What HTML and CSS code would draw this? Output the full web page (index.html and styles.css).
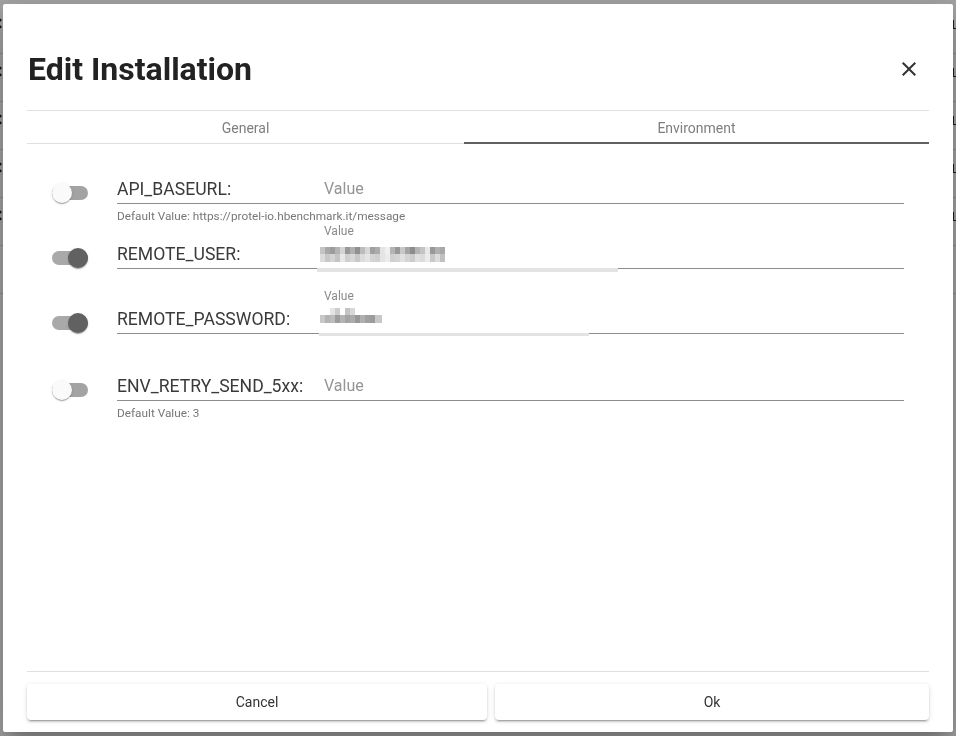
FILE: index.html
```html
<!DOCTYPE html>
<html lang="en">
<head>
<meta charset="utf-8">
<title>Edit Installation</title>
<link rel="stylesheet" href="styles.css">
</head>
<body>
<div class="page">
  <div class="page-row"><span class="chev"></span><span class="mark"></span></div>
  <div class="page-row"><span class="chev"></span><span class="mark"></span></div>
  <div class="page-row"><span class="chev"></span><span class="mark"></span></div>
  <div class="page-row"><span class="chev"></span><span class="mark"></span></div>
  <div class="page-row"><span class="chev"></span><span class="mark"></span></div>
  <div class="page-row"></div>
</div>
<div class="backdrop"></div>

<div class="dialog">
  <header class="dlg-head">
    <h1 class="dlg-title">Edit Installation</h1>
    <button class="close" type="button" aria-label="Close">
      <svg width="24" height="24" viewBox="0 0 24 24"><path d="M19 6.41L17.59 5 12 10.59 6.41 5 5 6.41 10.59 12 5 17.59 6.41 19 12 13.41 17.59 19 19 17.59 13.41 12z" fill="#333"/></svg>
    </button>
  </header>

  <nav class="tabs">
    <div class="tab">General</div>
    <div class="tab active">Environment</div>
  </nav>

  <div class="env-list">
    <div class="env-row">
      <div class="toggle"><span class="track"></span><span class="thumb"></span></div>
      <div class="field-col">
        <div class="field">
          <span class="field-label">API_BASEURL:</span>
          <span class="field-input"><span class="placeholder">Value</span></span>
        </div>
        <div class="hint">Default Value: https://protel-io.hbenchmark.it/message</div>
      </div>
    </div>

    <div class="env-row">
      <div class="toggle on"><span class="track"></span><span class="thumb"></span></div>
      <div class="field-col">
        <div class="field">
          <span class="field-label">REMOTE_USER:</span>
          <span class="field-input filled">
            <span class="float-label">Value</span>
            <svg class="mosaic" width="125" height="15" viewBox="0 0 125 15">
              <rect x="0" y="0" width="5" height="7" fill="#c4c4c4"/><rect x="5" y="0" width="5" height="7" fill="#a8a8a8"/><rect x="10" y="0" width="5" height="7" fill="#9c9c9c"/><rect x="15" y="0" width="5" height="7" fill="#b4b4b4"/><rect x="20" y="0" width="5" height="7" fill="#d4d4d4"/><rect x="25" y="0" width="5" height="7" fill="#989898"/><rect x="30" y="0" width="5" height="7" fill="#b0b0b0"/><rect x="35" y="0" width="5" height="7" fill="#909090"/><rect x="40" y="0" width="5" height="7" fill="#bcbcbc"/><rect x="45" y="0" width="5" height="7" fill="#d8d8d8"/><rect x="50" y="0" width="5" height="7" fill="#a0a0a0"/><rect x="55" y="0" width="5" height="7" fill="#acacac"/><rect x="60" y="0" width="5" height="7" fill="#e4e4e4"/><rect x="65" y="0" width="5" height="7" fill="#f0f0f0"/><rect x="70" y="0" width="5" height="7" fill="#b4b4b4"/><rect x="75" y="0" width="5" height="7" fill="#989898"/><rect x="80" y="0" width="5" height="7" fill="#c8c8c8"/><rect x="85" y="0" width="5" height="7" fill="#a4a4a4"/><rect x="90" y="0" width="5" height="7" fill="#8c8c8c"/><rect x="95" y="0" width="5" height="7" fill="#b4b4b4"/><rect x="100" y="0" width="5" height="7" fill="#c4c4c4"/><rect x="105" y="0" width="5" height="7" fill="#e8e8e8"/><rect x="110" y="0" width="5" height="7" fill="#989898"/><rect x="115" y="0" width="5" height="7" fill="#b0b0b0"/><rect x="120" y="0" width="5" height="7" fill="#a8a8a8"/>
              <rect x="0" y="7" width="5" height="8" fill="#dcdcdc"/><rect x="5" y="7" width="5" height="8" fill="#c8c8c8"/><rect x="10" y="7" width="5" height="8" fill="#d4d4d4"/><rect x="15" y="7" width="5" height="8" fill="#c4c4c4"/><rect x="20" y="7" width="5" height="8" fill="#e8e8e8"/><rect x="25" y="7" width="5" height="8" fill="#d0d0d0"/><rect x="30" y="7" width="5" height="8" fill="#d8d8d8"/><rect x="35" y="7" width="5" height="8" fill="#c8c8c8"/><rect x="40" y="7" width="5" height="8" fill="#dcdcdc"/><rect x="45" y="7" width="5" height="8" fill="#e4e4e4"/><rect x="50" y="7" width="5" height="8" fill="#d4d4d4"/><rect x="55" y="7" width="5" height="8" fill="#d0d0d0"/><rect x="60" y="7" width="5" height="8" fill="#e4e4e4"/><rect x="65" y="7" width="5" height="8" fill="#ececec"/><rect x="70" y="7" width="5" height="8" fill="#d0d0d0"/><rect x="75" y="7" width="5" height="8" fill="#d4d4d4"/><rect x="80" y="7" width="5" height="8" fill="#e0e0e0"/><rect x="85" y="7" width="5" height="8" fill="#d4d4d4"/><rect x="90" y="7" width="5" height="8" fill="#cccccc"/><rect x="95" y="7" width="5" height="8" fill="#e0e0e0"/><rect x="100" y="7" width="5" height="8" fill="#dcdcdc"/><rect x="105" y="7" width="5" height="8" fill="#ececec"/><rect x="110" y="7" width="5" height="8" fill="#c8c8c8"/><rect x="115" y="7" width="5" height="8" fill="#dcdcdc"/><rect x="120" y="7" width="5" height="8" fill="#c0c0c0"/>
            </svg>
            <span class="bar bar-user"></span>
          </span>
        </div>
      </div>
    </div>

    <div class="env-row">
      <div class="toggle on"><span class="track"></span><span class="thumb"></span></div>
      <div class="field-col">
        <div class="field">
          <span class="field-label">REMOTE_PASSWORD:</span>
          <span class="field-input filled pass">
            <span class="float-label">Value</span>
            <svg class="mosaic" width="62" height="15" viewBox="0 0 62 15">
              <rect x="10" y="0" width="5" height="7" fill="#e4e4e4"/><rect x="15" y="0" width="5" height="7" fill="#cccccc"/><rect x="25" y="0" width="5" height="7" fill="#c4c4c4"/><rect x="30" y="0" width="5" height="7" fill="#d8d8d8"/>
              <rect x="0" y="7" width="5" height="8" fill="#c8c8c8"/><rect x="5" y="7" width="5" height="8" fill="#b4b4b4"/><rect x="10" y="7" width="5" height="8" fill="#bcbcbc"/><rect x="15" y="7" width="5" height="8" fill="#9c9c9c"/><rect x="20" y="7" width="5" height="8" fill="#b4b4b4"/><rect x="25" y="7" width="5" height="8" fill="#a4a4a4"/><rect x="30" y="7" width="5" height="8" fill="#acacac"/><rect x="35" y="7" width="5" height="8" fill="#989898"/><rect x="40" y="7" width="5" height="8" fill="#b0b0b0"/><rect x="45" y="7" width="5" height="8" fill="#a0a0a0"/><rect x="50" y="7" width="5" height="8" fill="#9c9c9c"/><rect x="55" y="7" width="7" height="8" fill="#c8c8c8"/>
            </svg>
            <span class="bar bar-pass"></span>
          </span>
        </div>
      </div>
    </div>

    <div class="env-row last">
      <div class="toggle"><span class="track"></span><span class="thumb"></span></div>
      <div class="field-col">
        <div class="field">
          <span class="field-label">ENV_RETRY_SEND_5xx:</span>
          <span class="field-input"><span class="placeholder">Value</span></span>
        </div>
        <div class="hint">Default Value: 3</div>
      </div>
    </div>
  </div>

  <footer class="dlg-foot">
    <button class="btn btn-cancel" type="button">Cancel</button>
    <button class="btn btn-ok" type="button">Ok</button>
  </footer>
</div>
</body>
</html>
```

FILE: styles.css
```css
* { box-sizing: border-box; }

html, body {
  margin: 0;
  height: 100%;
}

body {
  font-family: Roboto, "Liberation Sans", Arial, sans-serif;
  background: #ffffff;
  overflow: hidden;
}

/* page behind the dialog */
.page {
  padding-top: 6px;
}

.page-row {
  height: 48px;
  border-bottom: 1px solid #dcdcdc;
  display: flex;
  justify-content: space-between;
  align-items: flex-start;
  padding-top: 14px;
}

.chev {
  display: block;
  width: 7px;
  height: 7px;
  margin-left: -3px;
  border-left: 2px solid #222;
  border-bottom: 2px solid #222;
  transform: rotate(45deg);
}

.mark {
  display: block;
  width: 6px;
  height: 9px;
  margin-right: -3px;
  border-left: 1px solid #333;
  border-bottom: 1px solid #333;
}

.backdrop {
  position: fixed;
  inset: 0;
  background: rgba(0, 0, 0, 0.36);
}

/* dialog */
.dialog {
  position: fixed;
  left: 3px;
  top: 4px;
  width: 950px;
  height: 728px;
  background: #fff;
  border-radius: 2px;
  box-shadow: 0 11px 15px -7px rgba(0,0,0,.2), 0 24px 38px 3px rgba(0,0,0,.14), 0 9px 46px 8px rgba(0,0,0,.12);
  padding: 0 24px;
  display: flex;
  flex-direction: column;
}

.dlg-head {
  height: 107px;
  padding-top: 23px;
  border-bottom: 1px solid #e0e0e0;
  display: flex;
  align-items: center;
  justify-content: space-between;
}

.dlg-title {
  margin: 0 0 0 1px;
  font-size: 32px;
  font-weight: 700;
  color: #222;
}

.close {
  width: 40px;
  height: 40px;
  border: 0;
  background: transparent;
  padding: 0;
  display: flex;
  align-items: center;
  justify-content: center;
}

/* tabs */
.tabs {
  display: grid;
  grid-template-columns: 437px 1fr;
  height: 33px;
}

.tab {
  display: flex;
  align-items: center;
  justify-content: center;
  font-size: 14px;
  color: #7e7e7e;
  border-bottom: 1px solid #e0e0e0;
  padding-top: 1px;
}

.tab.active {
  border-bottom: 2px solid #616161;
  padding-top: 2px;
}

/* environment list */
.env-list {
  flex: 1;
}

.env-row {
  display: grid;
  grid-template-columns: 90px 1fr;
  height: 65px;
}

.env-row.last {
  margin-top: 2px;
}

.toggle {
  position: relative;
  width: 36px;
  height: 20px;
  margin-top: 39px;
  margin-left: 25px;
}

.track {
  display: block;
  margin-top: 3px;
  width: 36px;
  height: 14px;
  border-radius: 7px;
  background: #a3a3a3;
}

.toggle.on .track {
  background: #a9a9a9;
}

.thumb {
  position: absolute;
  left: 0;
  top: 0;
  width: 20px;
  height: 20px;
  border-radius: 50%;
  background: #fafafa;
  box-shadow: 0 2px 1px -1px rgba(0,0,0,.2), 0 1px 1px 0 rgba(0,0,0,.14), 0 1px 3px 0 rgba(0,0,0,.12);
}

.toggle.on .thumb {
  left: 16px;
  background: #616161;
}

.field-col {
  margin-right: 25px;
}

.field {
  height: 60px;
  border-bottom: 1px solid #8d8d8d;
  display: flex;
  align-items: flex-end;
}

.field-label {
  width: 200px;
  flex: none;
  font-size: 17.6px;
  line-height: 20px;
  padding-bottom: 4px;
  color: #3a3a3a;
}

.field-input {
  flex: 1;
  position: relative;
  padding-left: 7px;
  display: flex;
  flex-direction: column;
  align-items: flex-start;
}

.placeholder {
  font-size: 16px;
  line-height: 20px;
  padding-bottom: 4px;
  color: #959595;
}

.field-input.filled {
  padding-bottom: 6px;
}

.field-input.pass {
  padding-bottom: 10px;
}

.float-label {
  font-size: 12px;
  line-height: 16px;
  color: #8a8a8a;
  margin-bottom: 8px;
}

.field-input.pass .float-label {
  margin-bottom: 4px;
}

.mosaic {
  display: block;
  margin-left: -4px;
}

.bar {
  position: absolute;
  left: 0;
  bottom: -4px;
  height: 4px;
  background: #e3e3e3;
}

.bar-user { width: 301px; }
.bar-pass { width: 270px; left: 2px; bottom: -3px; height: 3px; }

.hint {
  margin-top: 4px;
  font-size: 11.8px;
  line-height: 16px;
  color: #777;
}

/* footer */
.dlg-foot {
  border-top: 1px solid #e0e0e0;
  padding: 12px 0;
  display: grid;
  grid-template-columns: 460px 1fr;
  gap: 8px;
}

.btn {
  height: 36px;
  border: 0;
  border-radius: 4px;
  background: #fff;
  font-family: Roboto, "Liberation Sans", Arial, sans-serif;
  font-size: 14px;
  color: #333;
  box-shadow: 0 3px 1px -2px rgba(0,0,0,.2), 0 2px 2px 0 rgba(0,0,0,.14), 0 1px 5px 0 rgba(0,0,0,.12);
}
```
